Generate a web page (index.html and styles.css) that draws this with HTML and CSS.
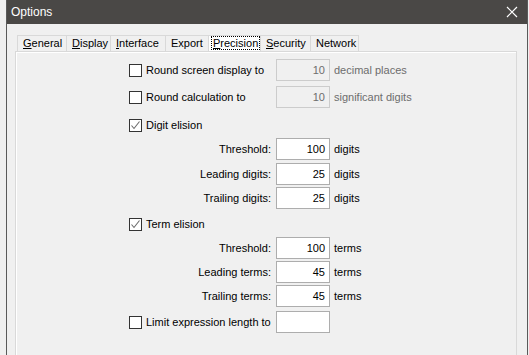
FILE: index.html
```html
<!DOCTYPE html>
<html>
<head>
<meta charset="utf-8">
<link rel="stylesheet" href="styles.css">
</head>
<body>
<div class="window">
  <div class="titlebar">
    <span class="title">Options</span>
    <svg class="close" width="12" height="12" viewBox="0 0 12 12"><path d="M1 1L11 11M11 1L1 11" stroke="#fff" stroke-width="1.2" fill="none"/></svg>
  </div>
  <div class="client">
    <div class="tabs">
      <div class="tab w-general"><u>G</u>eneral</div>
      <div class="tab w-display"><u>D</u>isplay</div>
      <div class="tab w-interface"><u>I</u>nterface</div>
      <div class="tab w-export">Export</div>
      <div class="tab w-precision selected"><span class="focus"><u>P</u>recision</span></div>
      <div class="tab w-security"><u>S</u>ecurity</div>
      <div class="tab w-network">Network</div>
    </div>
    <div class="panel">
      <div class="rows">
        <div class="row r-a">
          <div class="lead"><span class="cb"></span><span class="cblabel">Round screen display to</span></div>
          <div class="field disabled">10</div>
          <span class="unit disabled-text">decimal places</span>
        </div>
        <div class="row r-b">
          <div class="lead"><span class="cb"></span><span class="cblabel">Round calculation to</span></div>
          <div class="field disabled">10</div>
          <span class="unit disabled-text">significant digits</span>
        </div>
        <div class="row r-c">
          <div class="lead"><span class="cb checked"><svg width="11" height="11" viewBox="0 0 11 11"><path d="M1.5 5.5L4 8.5L9.5 1.5" stroke="#6b6b6b" stroke-width="1.1" fill="none"/></svg></span><span class="cblabel">Digit elision</span></div>
        </div>
        <div class="row r-d">
          <div class="lead sub">Threshold:</div>
          <div class="field">100</div>
          <span class="unit">digits</span>
        </div>
        <div class="row r-e">
          <div class="lead sub">Leading digits:</div>
          <div class="field">25</div>
          <span class="unit">digits</span>
        </div>
        <div class="row r-f">
          <div class="lead sub">Trailing digits:</div>
          <div class="field">25</div>
          <span class="unit">digits</span>
        </div>
        <div class="row r-g">
          <div class="lead"><span class="cb checked"><svg width="11" height="11" viewBox="0 0 11 11"><path d="M1.5 5.5L4 8.5L9.5 1.5" stroke="#6b6b6b" stroke-width="1.1" fill="none"/></svg></span><span class="cblabel">Term elision</span></div>
        </div>
        <div class="row r-h">
          <div class="lead sub">Threshold:</div>
          <div class="field">100</div>
          <span class="unit">terms</span>
        </div>
        <div class="row r-i">
          <div class="lead sub">Leading terms:</div>
          <div class="field">45</div>
          <span class="unit">terms</span>
        </div>
        <div class="row r-j">
          <div class="lead sub">Trailing terms:</div>
          <div class="field">45</div>
          <span class="unit">terms</span>
        </div>
        <div class="row r-k">
          <div class="lead"><span class="cb"></span><span class="cblabel">Limit expression length to</span></div>
          <div class="field"></div>
        </div>
      </div>
    </div>
  </div>
</div>
</body>
</html>
```
FILE: styles.css
```css
html, body {
  margin: 0;
  padding: 0;
  background: #f0f0f0;
  font-family: "Liberation Sans", Arial, sans-serif;
  font-size: 11px;
  color: #000;
  overflow: hidden;
}
.window {
  margin-left: 6px;
  width: 520px;
  height: 355px;
  overflow: hidden;
  border-left: 1px solid #5a5a5a;
  border-right: 1px solid #5a5a5a;
  background: #f0f0f0;
}
.titlebar {
  height: 24px;
  background: #4a4846;
  color: #fff;
  display: flex;
  align-items: center;
  justify-content: space-between;
  padding: 0 9px 0 4px;
}
.title {
  font-size: 12px;
  line-height: 24px;
}
.close { display: block; }
.client {
  padding: 11px 10px 0 8px;
}
.tabs {
  display: flex;
  height: 16px;
  padding-left: 2px;
}
.tab {
  box-sizing: border-box;
  height: 16px;
  border: 1px solid #d9d9d9;
  border-bottom: none;
  border-left: none;
  padding-left: 5px;
  line-height: 15px;
  white-space: nowrap;
  background: #f0f0f0;
}
.tab:first-child { border-left: 1px solid #d9d9d9; }
.tab.selected {
  background: #fff;
  padding-left: 3px;
}
.focus {
  outline: 1px dotted #000;
  outline-offset: 0;
  padding: 0 1px;
}
.w-general { width: 50px; }
.w-display { width: 44px; }
.w-interface { width: 55px; }
.w-export { width: 43px; }
.w-precision { width: 52px; }
.w-security { width: 50px; }
.w-network { width: 48px; }

.panel {
  height: 320px;
  border: 1px solid #d9d9d9;
  box-shadow: inset 1px 1px 0 #fff;
  background: #f0f0f0;
}
.rows {
  display: flex;
  flex-direction: column;
  padding: 7px 0 0 113px;
}
.row {
  display: flex;
  align-items: center;
  height: 22px;
}
.r-b { margin-top: 5px; }
.r-c { margin-top: 6px; }
.r-d { margin-top: 2px; }
.r-e { margin-top: 3px; }
.r-f { margin-top: 2px; }
.r-g { margin-top: 4px; }
.r-h { margin-top: 2px; }
.r-i { margin-top: 2px; }
.r-j { margin-top: 2px; }
.r-k { margin-top: 4px; }
.lead {
  width: 142px;
  display: flex;
  align-items: center;
  white-space: nowrap;
}
.lead.sub { justify-content: flex-end; }
.cb {
  box-sizing: border-box;
  width: 13px;
  height: 13px;
  border: 1px solid #333;
  background: #fff;
  display: flex;
  align-items: center;
  justify-content: center;
  flex: none;
}
.cblabel { margin-left: 4px; }
.field {
  box-sizing: border-box;
  width: 54px;
  height: 22px;
  margin-left: 5px;
  border: 1px solid #adadad;
  background: #fff;
  text-align: right;
  padding-right: 4px;
  line-height: 20px;
}
.field.disabled {
  background: #f0f0f0;
  border-color: #cccccc;
  color: #6d6d6d;
}
.unit {
  margin-left: 4px;
  white-space: nowrap;
}
.disabled-text { color: #6d6d6d; }
```
